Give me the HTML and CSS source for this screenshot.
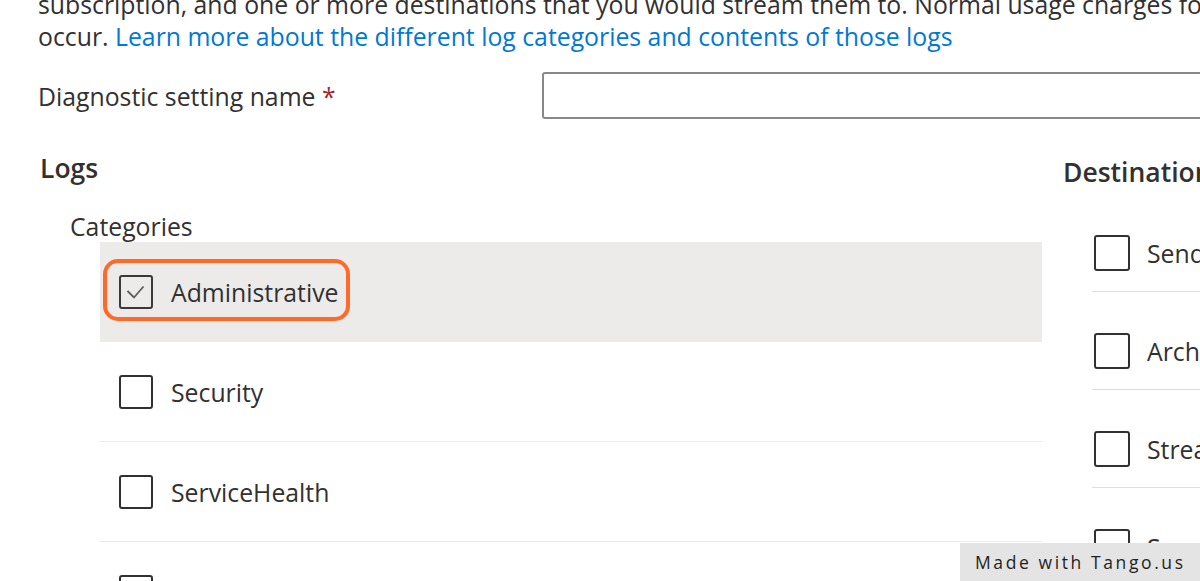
FILE: index.html
```html
<!DOCTYPE html>
<html lang="en">
<head>
<meta charset="utf-8">
<title>Diagnostic setting</title>
<link rel="stylesheet" href="styles.css">
</head>
<body>
<div class="page">
  <p class="intro">subscription, and one or more destinations that you would stream them to. Normal usage charges for<br>occur. <a class="link" href="#">Learn more about the different log categories and contents of those logs</a></p>

  <div class="name-row">
    <label class="field-label">Diagnostic setting name <span class="req">*</span></label>
    <div class="text-input"></div>
  </div>

  <div class="columns">
    <section class="logs">
      <h2 class="heading">Logs</h2>
      <div class="subheading">Categories</div>
      <div class="list">
        <div class="row row-hover">
          <span class="box checked">
            <svg width="34" height="34" viewBox="0 0 34 34"><path d="M8.5 16 L15 22.5 L24.5 11.5" fill="none" stroke="#605e5c" stroke-width="1.8"/></svg>
          </span>
          <span class="row-label">Administrative</span>
          <span class="highlight"></span>
        </div>
        <div class="row">
          <span class="box"></span>
          <span class="row-label">Security</span>
        </div>
        <div class="row">
          <span class="box"></span>
          <span class="row-label">ServiceHealth</span>
        </div>
        <div class="row">
          <span class="box"></span>
          <span class="row-label">Alert</span>
        </div>
      </div>
    </section>

    <section class="dest">
      <h2 class="heading heading-dest">Destination details</h2>
      <div class="dest-list">
        <div class="drow"><span class="box"></span><span class="row-label">Send to Log Analytics workspace</span></div>
        <div class="drow"><span class="box"></span><span class="row-label">Archive to a storage account</span></div>
        <div class="drow"><span class="box"></span><span class="row-label">Stream to an event hub</span></div>
        <div class="drow"><span class="box"></span><span class="row-label">Send to partner solution</span></div>
      </div>
    </section>
  </div>
</div>
<div class="tango">Made with Tango.us</div>
</body>
</html>
```

FILE: styles.css
```css
html, body {
  margin: 0;
  padding: 0;
  background: #ffffff;
  overflow: hidden;
  height: 581px;
}

body {
  font-family: "Open Sans", "Noto Sans", sans-serif;
  color: #323130;
  font-size: 24.8px;
  line-height: 32px;
}

.page {
  width: 1500px;
}

.intro {
  margin: -12px 0 0 0;
  padding-left: 38px;
  white-space: nowrap;
}

.link {
  color: #0078d4;
  text-decoration: none;
}

.name-row {
  display: flex;
  align-items: center;
  margin-top: 20px;
  padding-left: 38px;
}

.field-label {
  width: 504px;
  flex: none;
}

.req {
  color: #a4262c;
}

.text-input {
  width: 800px;
  height: 43px;
  border: 2px solid #8a8886;
  border-radius: 3px;
  background: #fff;
}

.columns {
  display: flex;
  align-items: flex-start;
}

.logs {
  width: 1002px;
  margin-left: 40px;
  flex: none;
}

.heading {
  margin: 33px 0 0 0;
  font-size: 26.5px;
  line-height: 32px;
  font-weight: 600;
}

.heading-dest {
  margin-top: 37px;
}

.subheading {
  margin-top: 26px;
  margin-left: 30px;
}

.list {
  margin-top: 0;
  margin-left: 60px;
}

.row {
  position: relative;
  display: flex;
  align-items: center;
  height: 99px;
  padding-left: 19px;
  border-bottom: 1px solid #edebe9;
}

.row-hover {
  background: #edebe9;
}

.box {
  flex: none;
  width: 30px;
  height: 30px;
  border: 2px solid #323130;
  border-radius: 3px;
  position: relative;
  background: transparent;
}

.box svg {
  position: absolute;
  left: -2px;
  top: -2px;
}

.checked {
  border-color: #3b3a39;
}

.row-label {
  margin-left: 18px;
  white-space: nowrap;
}

.highlight {
  position: absolute;
  left: 3px;
  top: 17px;
  width: 239px;
  height: 54px;
  border: 4px solid #ff6a2a;
  border-radius: 15px;
  pointer-events: none;
}

.dest {
  margin-left: 21px;
  flex: none;
  width: 600px;
}

.dest-list {
  margin-top: 6px;
  margin-left: 29px;
}

.drow {
  display: flex;
  align-items: flex-start;
  height: 56px;
  padding-top: 41px;
  padding-left: 2px;
  border-bottom: 1px solid #e1dfdd;
}

.drow .box {
  width: 32px;
  height: 32px;
}

.drow .row-label {
  margin-left: 17px;
  line-height: 36px;
}

.tango {
  position: fixed;
  right: 0;
  bottom: 0;
  width: 240px;
  height: 38px;
  background: #e4e4e4;
  color: #1f1f1f;
  font-family: "Open Sans", sans-serif;
  font-size: 17.5px;
  letter-spacing: 2.6px;
  line-height: 38px;
  box-sizing: border-box;
  padding-left: 15px;
  white-space: nowrap;
}
```
